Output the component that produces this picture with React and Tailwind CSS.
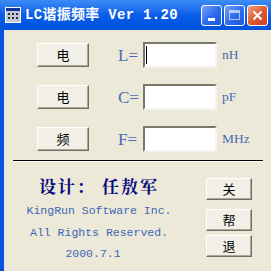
const cjk = { fontFamily: '"Noto Sans CJK SC", "Liberation Sans", sans-serif' };
const mono = { fontFamily: '"Liberation Mono", "Noto Sans CJK SC", monospace' };
const serif = { fontFamily: '"Liberation Serif", "Noto Sans CJK SC", serif' };

function XpButton({ label, className }) {
  return (
    <div
      className={`flex items-center justify-center bg-[#f1efe6] border border-t-white border-l-white border-r-[#716f64] border-b-[#716f64] shadow-[inset_-1px_-1px_0_#aca899] text-[13px] text-black ${className}`}
      style={cjk}
    >
      {label}
    </div>
  );
}

function Field({ btn, name, unit, caret }) {
  return (
    <div className="flex items-center h-[26px]">
      <XpButton label={btn} className="ml-[33px] w-[52px] h-[24px]" />
      <span className="ml-[29px] w-[25px] text-[17px] leading-none text-[#4a6bb5]" style={serif}>
        {name}
      </span>
      <div className="relative w-[74px] h-[26px] bg-white border-2 border-t-[#7a7869] border-l-[#7a7869] border-r-[#f4f3ee] border-b-[#f4f3ee]">
        {caret && <span className="absolute left-[1px] top-[2px] w-[1px] h-[18px] bg-black" />}
      </div>
      <span className="ml-[5px] text-[13.5px] text-[#4a6bb5]" style={serif}>
        {unit}
      </span>
    </div>
  );
}

function TitleButton({ children, red }) {
  return (
    <div
      className={`w-[21px] h-[21px] rounded-[3px] border border-white flex items-center justify-center ${
        red
          ? "bg-gradient-to-br from-[#f0a080] via-[#e05a30] to-[#c8401c]"
          : "bg-gradient-to-br from-[#7aa2f8] via-[#2f6df0] to-[#1e56d8]"
      }`}
    >
      {children}
    </div>
  );
}

export default function App() {
  return (
    <div className="w-[271px] h-[271px] overflow-hidden flex flex-col bg-[#ece9d8]">
      <div className="h-[30px] flex items-center bg-gradient-to-b from-[#3d8cf7] via-[#0a5de8] to-[#0052dd] pl-[5px] pr-[3px]">
        <svg width="16" height="16" viewBox="0 0 16 16" className="shrink-0">
          <rect x="0" y="0" width="16" height="16" fill="#ffffff" />
          <rect x="1" y="1" width="14" height="14" fill="#c0c8d8" />
          <rect x="1" y="1" width="14" height="3" fill="#1030a0" />
          <rect x="3" y="6" width="2" height="2" fill="#303030" />
          <rect x="7" y="6" width="2" height="2" fill="#303030" />
          <rect x="11" y="6" width="2" height="2" fill="#303030" />
          <rect x="3" y="10" width="2" height="2" fill="#303030" />
          <rect x="7" y="10" width="2" height="2" fill="#303030" />
          <rect x="11" y="10" width="2" height="2" fill="#303030" />
        </svg>
        <span className="ml-[4px] text-white font-bold text-[14px] tracking-[0.3px] leading-none whitespace-pre" style={mono}>
          LC谐振频率 Ver 1.20
        </span>
        <div className="ml-auto flex gap-[2px]">
          <TitleButton>
            <span className="mt-[9px] w-[7px] h-[3px] bg-white" />
          </TitleButton>
          <TitleButton>
            <span className="w-[11px] h-[10px] border border-t-[3px] border-white/60" />
          </TitleButton>
          <TitleButton red>
            <svg width="11" height="11" viewBox="0 0 11 11">
              <path d="M1.5 1.5 L9.5 9.5 M9.5 1.5 L1.5 9.5" stroke="white" strokeWidth="2" />
            </svg>
          </TitleButton>
        </div>
      </div>

      <div className="flex-1 flex flex-col border-l-4 border-l-[#0a52e0] pt-[12px]">
        <div className="flex flex-col gap-[16px]">
          <Field btn="电" name="L=" unit="nH" caret />
          <Field btn="电" name="C=" unit="pF" />
          <Field btn="频" name="F=" unit="MHz" />
        </div>

        <div className="mt-[8px] ml-[9px] w-[250px] h-[2px] border-t border-t-black border-b border-b-white" />

        <div className="flex">
          <div className="w-[172px] ml-[9px] flex flex-col items-center text-[#3f66b8]">
            <div
              className="mt-[15px] h-[18px] leading-[18px] text-[17px] font-bold text-[#0a0a80] tracking-[2px] whitespace-pre"
              style={{ fontFamily: '"Noto Serif CJK SC", "Noto Sans CJK SC", serif' }}
            >
              设计： 任敖军
            </div>
            <div className="mt-[9px] h-[14px] leading-[14px] text-[11.5px] whitespace-pre" style={mono}>
              KingRun Software Inc.
            </div>
            <div className="mt-[8px] h-[14px] leading-[14px] text-[11.5px] whitespace-pre" style={mono}>
              All Rights Reserved.
            </div>
            <div className="mt-[7px] h-[14px] leading-[14px] text-[11.5px] whitespace-pre mr-[12px]" style={mono}>
              2000.7.1
            </div>
          </div>
          <div className="ml-[21px] flex flex-col pt-[16px]">
            <XpButton label="关" className="w-[46px] h-[22px]" />
            <XpButton label="帮" className="mt-[9px] w-[46px] h-[22px]" />
            <XpButton label="退" className="mt-[4px] w-[46px] h-[22px]" />
          </div>
        </div>
      </div>
    </div>
  );
}
